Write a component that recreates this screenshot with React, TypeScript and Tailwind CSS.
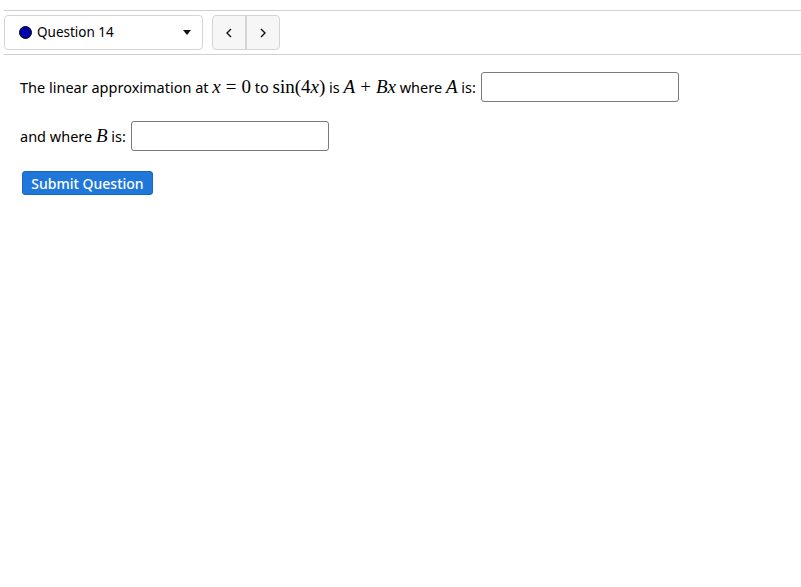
import React from "react";

function M({ children, i = true }: { children: React.ReactNode; i?: boolean }) {
  return (
    <span className={`font-['Liberation_Serif',serif] text-[19px] ${i ? "italic" : ""}`}>{children}</span>
  );
}

function Op({ children }: { children: React.ReactNode }) {
  return <span className="mx-[5px] font-['Liberation_Serif',serif] text-[19px]">{children}</span>;
}

export default function App() {
  return (
    <div className="min-h-[587px] w-[801px] bg-white text-black font-['Noto_Sans',sans-serif] text-[14.5px]">
      <div className="pl-1 pt-[10px]">
        <div className="border-t border-[#d0d0d0]" />
        <div className="flex items-center gap-[9px] pt-1 pb-1">
          <div className="flex h-[35px] w-[199px] items-center rounded-[4px] border border-[#d4d4d4] bg-white pl-[14px] pr-[10px]">
            <span className="h-[13px] w-[13px] rounded-full border border-black bg-[#0000a8]" />
            <span className="ml-[5px] flex-1 text-[13.5px]">Question 14</span>
            <svg width="8" height="6" viewBox="0 0 8 6" className="mr-[1px]">
              <polygon points="0,0 8,0 4,5" fill="#111" />
            </svg>
          </div>
          <div className="flex h-[35px] w-[68px] rounded-[4px] border border-[#d4d4d4] bg-[#f6f6f6]">
            <div className="flex flex-1 items-center justify-center border-r-2 border-[#d4d4d4]">
              <svg width="8" height="10" viewBox="0 0 8 10">
                <polyline points="6,1 2,5 6,9" fill="none" stroke="#111" strokeWidth="1.4" />
              </svg>
            </div>
            <div className="flex flex-1 items-center justify-center">
              <svg width="8" height="10" viewBox="0 0 8 10">
                <polyline points="2,1 6,5 2,9" fill="none" stroke="#111" strokeWidth="1.4" />
              </svg>
            </div>
          </div>
        </div>
        <div className="border-t border-[#d0d0d0]" />
      </div>

      <div className="px-5 pt-[17px]">
        <div className="flex items-center h-[30px]">
          <span>
            The linear approximation at <M>x</M>
            <Op>=</Op>
            <M i={false}>0</M> to <M i={false}>sin(4</M>
            <M>x</M>
            <M i={false}>)</M> is <M>A</M>
            <Op>+</Op>
            <M>Bx</M> where <M>A</M> is:
          </span>
          <input className="ml-[5px] h-[30px] w-[198px] rounded-[3px] border border-[#7a7a7a] bg-white" />
        </div>
        <div className="mt-[19px] flex items-center h-[30px]">
          <span>
            and where <M>B</M> is:
          </span>
          <input className="ml-[5px] h-[30px] w-[198px] rounded-[3px] border border-[#7a7a7a] bg-white" />
        </div>
        <button className="ml-[2px] mt-[20px] h-[24px] w-[131px] rounded-[3px] border border-[#1668c4] bg-[#1f78d9] text-[14px] font-medium text-white">
          Submit Question
        </button>
      </div>
    </div>
  );
}
